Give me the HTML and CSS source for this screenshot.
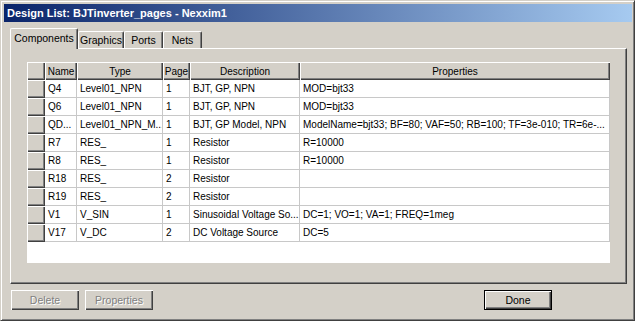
FILE: index.html
```html
<!DOCTYPE html>
<html>
	<head>
		<title>Design List</title>
		<link rel="stylesheet" href="styles.css">
	</head>
	<body>
		<!--window-->
		<div class="window">
			<div class="titlebar">Design List: BJTinverter_pages - Nexxim1</div>
			<div class="content">
				<!--tabs-->
				<div class="tabs">
					<div class="tab active">Components</div>
					<div class="tab t-graphics">Graphics</div>
					<div class="tab t-small">Ports</div>
					<div class="tab t-small">Nets</div>
				</div>
				<!--tab panel-->
				<div class="panel">
					<div class="grid">
						<table>
							<colgroup>
								<col class="c-row">
								<col class="c-name">
								<col class="c-type">
								<col class="c-page">
								<col class="c-desc">
								<col class="c-props">
							</colgroup>
							<thead>
								<tr>
									<th></th>
									<th>Name</th>
									<th>Type</th>
									<th>Page</th>
									<th>Description</th>
									<th>Properties</th>
								</tr>
							</thead>
							<tbody>
								<tr><th></th><td>Q4</td><td>Level01_NPN</td><td>1</td><td>BJT, GP, NPN</td><td>MOD=bjt33</td></tr>
								<tr><th></th><td>Q6</td><td>Level01_NPN</td><td>1</td><td>BJT, GP, NPN</td><td>MOD=bjt33</td></tr>
								<tr><th></th><td>QD...</td><td>Level01_NPN_M...</td><td>1</td><td>BJT, GP Model, NPN</td><td>ModelName=bjt33; BF=80; VAF=50; RB=100; TF=3e-010; TR=6e-...</td></tr>
								<tr><th></th><td>R7</td><td>RES_</td><td>1</td><td>Resistor</td><td>R=10000</td></tr>
								<tr><th></th><td>R8</td><td>RES_</td><td>1</td><td>Resistor</td><td>R=10000</td></tr>
								<tr><th></th><td>R18</td><td>RES_</td><td>2</td><td>Resistor</td><td></td></tr>
								<tr><th></th><td>R19</td><td>RES_</td><td>2</td><td>Resistor</td><td></td></tr>
								<tr><th></th><td>V1</td><td>V_SIN</td><td>1</td><td>Sinusoidal Voltage So...</td><td>DC=1; VO=1; VA=1; FREQ=1meg</td></tr>
								<tr><th></th><td>V17</td><td>V_DC</td><td>2</td><td>DC Voltage Source</td><td>DC=5</td></tr>
							</tbody>
						</table>
					</div>
				</div>
				<!--buttons-->
				<div class="buttons">
					<button type="button" disabled>Delete</button>
					<button type="button" disabled>Properties</button>
					<button type="button" class="default">Done</button>
				</div>
			</div>
		</div>
	</body>
</html>
```

FILE: styles.css
```css
body{
	margin:0;
	background:#d4d0c8;
	font-family:"Liberation Sans", Arial, sans-serif;
	font-size:10px;
	color:#000;
}
.window{
	width:635px;
	height:321px;
	box-sizing:border-box;
	background:#d4d0c8;
	border-top:1px solid #d4d0c8;
	border-left:1px solid #d4d0c8;
	border-right:1px solid #404040;
	border-bottom:1px solid #404040;
	box-shadow:inset 1px 1px #fff, inset -1px -1px #808080;
	padding:3px 2px 2px 3px;
}
.titlebar{
	height:18px;
	line-height:18px;
	padding-left:3px;
	color:#fff;
	font-size:11px;
	font-weight:bold;
	background:linear-gradient(to right, #0a246a, #a6caf0);
}
.content{
	padding:0 5px 0 6px;
}
.tabs{
	display:flex;
	align-items:flex-end;
	height:26px;
}
.tab{
	height:17px;
	line-height:16px;
	box-sizing:border-box;
	text-align:center;
	border-top:1px solid #fff;
	border-left:1px solid #fff;
	border-right:1px solid #404040;
	box-shadow:inset -1px 0 #808080;
	border-radius:2px 2px 0 0;
	font-size:10.5px;
}
.tab.active{
	width:68px;
	height:21px;
	line-height:19px;
	margin-bottom:-1px;
	background:#d4d0c8;
	position:relative;
	z-index:1;
}
.t-graphics{width:46px;}
.t-small{width:39px;}
.panel{
	height:236px;
	box-sizing:border-box;
	border-top:1px solid #fff;
	border-left:1px solid #fff;
	border-right:1px solid #404040;
	border-bottom:1px solid #404040;
	box-shadow:inset -1px -1px #808080;
	padding:13px 0 0 16px;
}
.grid{
	width:583px;
	height:201px;
	background:#fff;
	overflow:hidden;
}
table{
	table-layout:fixed;
	border-spacing:0;
	width:583px;
}
.c-row{width:18px;}
.c-name{width:32px;}
.c-type{width:86px;}
.c-page{width:27px;}
.c-desc{width:110px;}
.c-props{width:310px;}
tr{
	height:18px;
}
th, td{
	padding:0 2px 0 3px;
	white-space:nowrap;
	overflow:hidden;
	text-align:left;
	font-weight:normal;
}
th{
	background:#d4d0c8;
	box-shadow:inset 1px 1px #fff, inset -1px -1px #404040, inset -2px -2px #808080;
}
thead th{
	text-align:center;
	padding:0;
}
td{
	height:17px;
	line-height:17px;
	border-right:1px solid #c8c8c8;
	border-bottom:1px solid #c8c8c8;
}
.buttons{
	display:flex;
	gap:6px;
	margin-top:6px;
	padding-left:1px;
}
button{
	width:68px;
	height:20px;
	font-family:inherit;
	font-size:10.5px;
	background:#d4d0c8;
	border:none;
	box-shadow:inset 1px 1px #fff, inset -1px -1px #404040, inset -2px -2px #808080;
	color:#000;
	padding:0;
}
button:disabled{
	color:#808080;
	text-shadow:1px 1px #fff;
}
button.default{
	margin-left:auto;
	margin-right:75px;
	border:1px solid #000;
}
```
